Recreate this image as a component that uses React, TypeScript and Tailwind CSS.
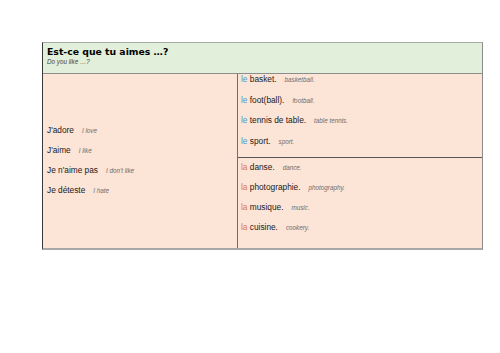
const likes = [
  { fr: "J'adore", en: 'I love' },
  { fr: "J'aime", en: 'I like' },
  { fr: "Je n'aime pas", en: "I don't like" },
  { fr: 'Je déteste', en: 'I hate' },
];

const le = [
  { w: 'basket.', en: 'basketball.' },
  { w: 'foot(ball).', en: 'football.' },
  { w: 'tennis de table.', en: 'table tennis.' },
  { w: 'sport.', en: 'sport.' },
];

const la = [
  { w: 'danse.', en: 'dance.' },
  { w: 'photographie.', en: 'photography.' },
  { w: 'musique.', en: 'music.' },
  { w: 'cuisine.', en: 'cookery.' },
];

export default function App() {
  return (
    <div className="w-[500px] h-[353px] bg-white pt-[42px] pl-[42px] font-['Liberation_Sans',Arial,sans-serif]">
      <div className="w-[441px] h-[208px] flex flex-col border border-[#8c8c8c] border-l-[#3a3a3a] border-t-[#a8a8a8] border-b-[#a8a8a8] border-b-2">
        {/* header */}
        <div className="h-[31px] bg-[#e2efda] border-b border-[#8c8c8c] px-[4px] pt-[3px]">
          <div className="font-['DejaVu_Sans',sans-serif] font-bold text-[9.3px] leading-[12px] text-black">
            Est-ce que tu aimes …?
          </div>
          <div className="italic text-[6.3px] leading-[8px] text-[#444]">Do you like …?</div>
        </div>

        <div className="flex-1 flex bg-[#fce4d6]">
          {/* left */}
          <div className="w-[195px] border-r border-[#6e6e6e] flex flex-col justify-center gap-[10px] px-[4px] pb-[2px]">
            {likes.map((l) => (
              <div key={l.fr} className="h-[10px] leading-[10px] text-[8.3px] text-[#1a1a1a] whitespace-nowrap">
                {l.fr}
                <span className="italic text-[6.3px] leading-none text-[#6e6e6e] ml-[8px]">{l.en}</span>
              </div>
            ))}
          </div>

          {/* right */}
          <div className="flex-1 flex flex-col">
            <div className="h-[84px] border-b border-[#555] flex flex-col gap-[10.5px] px-[3px]">
              {le.map((r) => (
                <Row key={r.w} art="le" color="text-[#4a9ad0]" w={r.w} en={r.en} />
              ))}
            </div>
            <div className="flex-1 flex flex-col gap-[10px] px-[3px] pt-[4px]">
              {la.map((r) => (
                <Row key={r.w} art="la" color="text-[#e07a4a]" w={r.w} en={r.en} />
              ))}
            </div>
          </div>
        </div>
      </div>
    </div>
  );
}

function Row({ art, color, w, en }: { art: string; color: string; w: string; en: string }) {
  return (
    <div className="h-[10px] leading-[10px] text-[8.3px] text-[#1a1a1a] whitespace-nowrap">
      <span className={color}>{art}</span> {w}
      <span className="italic text-[6.3px] leading-none text-[#6e6e6e] ml-[8px]">{en}</span>
    </div>
  );
}
